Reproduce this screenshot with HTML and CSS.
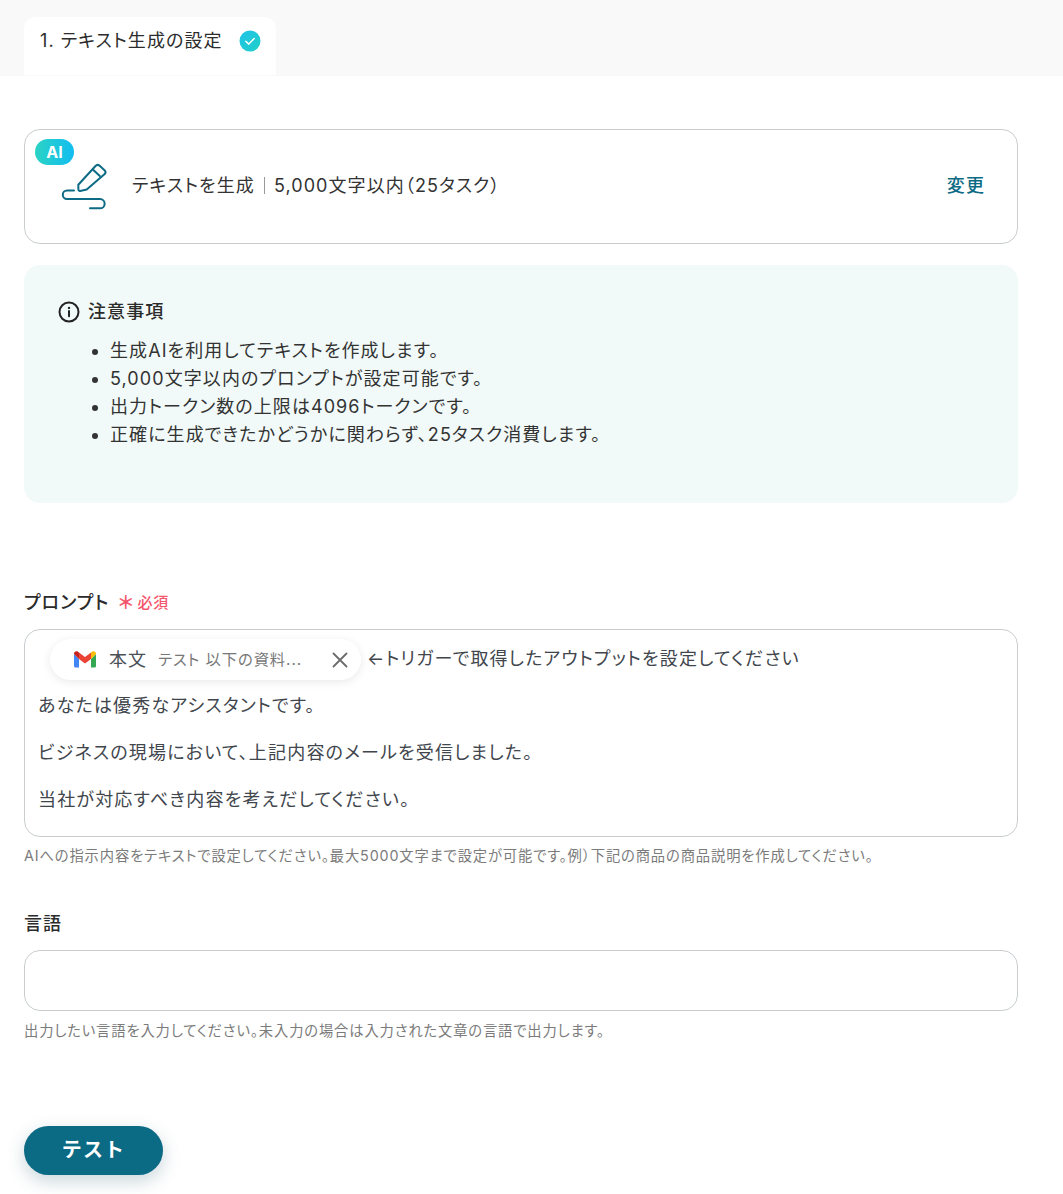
FILE: index.html
```html
<!DOCTYPE html>
<html lang="ja">
<head>
<meta charset="utf-8">
<title>テキスト生成の設定</title>
<link rel="stylesheet" href="styles.css">
</head>
<body>
<div class="tabbar">
  <div class="tab">
    <span class="tab-label">1. テキスト生成の設定</span>
    <svg class="tab-check" width="22" height="22" viewBox="0 0 22 22">
      <defs><linearGradient id="chk" x1="0" y1="0" x2="1" y2="1"><stop offset="0" stop-color="#1dc3e8"/><stop offset="1" stop-color="#22d0c8"/></linearGradient></defs>
      <circle cx="11" cy="11" r="10.5" fill="url(#chk)"/>
      <path d="M6.8 11.2l3 2.9 5.4-5.6" fill="none" stroke="#fff" stroke-width="1.5" stroke-linecap="round" stroke-linejoin="round"/>
    </svg>
  </div>
</div>
<main class="content">
  <section class="action-card">
    <span class="ai-badge">AI</span>
    <svg class="action-icon" width="46" height="48" viewBox="0 0 46 48" fill="none" stroke="#0d6b85" stroke-width="2" stroke-linecap="round" stroke-linejoin="round">
      <path d="M17.300 21.800L34.500 3a3 3 0 0 1 4.200-.2l4.800 4.400a2.800 2.800 0 0 1 .2 3.900L25.700 26.600l-6.600 1.300a1.400 1.400 0 0 1-1.700-1.500z"/>
      <path d="M31.800 6.500l7 6.600"/>
      <path d="M13 27.600H6a4.200 4.200 0 0 0 0 8.400H39a4.600 4.600 0 0 1 0 9.300H29"/>
    </svg>
    <p class="action-text">テキストを生成<span class="sep"></span>5,000文字以内（25タスク）</p>
    <a class="change-link">変更</a>
  </section>

  <section class="notice">
    <h3 class="notice-title">
      <svg class="info" width="22" height="22" viewBox="0 0 22 22" fill="none" stroke="#222" stroke-width="2"><circle cx="11" cy="11" r="9.500"/><path d="M11 10v5.200" stroke-linecap="round"/><circle cx="11" cy="6.900" r="1.200" fill="#222" stroke="none"/></svg>
      注意事項
    </h3>
    <ul class="notice-list">
      <li>生成AIを利用してテキストを作成します。</li>
      <li>5,000文字以内のプロンプトが設定可能です。</li>
      <li>出力トークン数の上限は4096トークンです。</li>
      <li>正確に生成できたかどうかに関わらず、25タスク消費します。</li>
    </ul>
  </section>

  <section class="field field-prompt">
    <div class="field-label">プロンプト<span class="required"><span class="star">＊</span>必須</span></div>
    <div class="textarea">
      <p class="line line-first">
        <span class="chip">
          <svg class="gmail" width="22" height="17" viewBox="0 0 22 17">
            <path d="M0 3v12a1.500 1.500 0 0 0 1.500 1.500H5V8z" fill="#4285f4"/>
            <path d="M17 8v8.500h3.500A1.500 1.500 0 0 0 22 15V3z" fill="#34a853"/>
            <path d="M17 1.500v6.500l5-5V2.500c0-2-2.200-3-3.700-1.900z" fill="#fbbc04"/>
            <path d="M5 8V1.500l6 4.600 6-4.600V8l-6 4.600z" fill="#ea4335"/>
            <path d="M0 2.500V3l5 5V1.500L3.700.600C2.200-.500 0 .5 0 2.500z" fill="#c5221f"/>
          </svg>
          <span class="chip-name">本文</span>
          <span class="chip-value">テスト 以下の資料...</span>
          <svg class="chip-x" width="16" height="16" viewBox="0 0 16 16" stroke="#6b6b6b" stroke-width="1.800" stroke-linecap="round"><path d="M1.500 1.500l13 13M14.500 1.500l-13 13"/></svg>
        </span>←トリガーで取得したアウトプットを設定してください
      </p>
      <p class="line">あなたは優秀なアシスタントです。</p>
      <p class="line">ビジネスの現場において、上記内容のメールを受信しました。</p>
      <p class="line">当社が対応すべき内容を考えだしてください。</p>
    </div>
    <p class="help">AIへの指示内容をテキストで設定してください。最大5000文字まで設定が可能です。例）下記の商品の商品説明を作成してください。</p>
  </section>

  <section class="field field-lang">
    <div class="field-label">言語</div>
    <div class="input"></div>
    <p class="help help-lang">出力したい言語を入力してください。未入力の場合は入力された文章の言語で出力します。</p>
  </section>

  <button class="test-btn">テスト</button>
</main>
</body>
</html>
```
FILE: styles.css
```css
* { box-sizing: border-box; }
html, body { margin: 0; padding: 0; background: #fff; }
body {
  height: 1194px;
  overflow: hidden;
  font-family: "Inter", "Noto Sans CJK JP", sans-serif;
  font-feature-settings: "palt";
  color: #2b2b2b;
}
p, h3, ul { margin: 0; padding: 0; }

.tab-label, .action-text, .change-link, .notice-title, .notice-list,
.field-label, .required, .chip-name, .chip-value, .help, .test-btn {
  letter-spacing: .06em;
}

.tabbar {
  height: 76px;
  background: #f9f9f9;
  padding: 17px 0 0 24px;
}
.tab {
  width: 252px;
  height: 58px;
  background: #fff;
  border-radius: 12px 12px 0 0;
  display: flex;
  align-items: flex-start;
  padding: 12px 0 0 16px;
}
.tab-label { font-size: 18px; line-height: 24px; font-weight: 400; color: #2c2c2c; width: 199px; white-space: nowrap; }
.tab-check { margin-top: 1px; }

.content { padding: 53px 45px 0 24px; }

.action-card {
  position: relative;
  height: 115px;
  border: 1px solid #c9cdd0;
  border-radius: 16px;
  display: flex;
  align-items: flex-start;
  padding: 33px 32px 0 36px;
}
.ai-badge {
  position: absolute;
  left: 10px;
  top: 9px;
  width: 39px;
  height: 26px;
  border-radius: 13px;
  background: linear-gradient(90deg, #2bd3c4, #12bdf0);
  color: #fff;
  font-size: 16px;
  font-weight: 700;
  line-height: 26px;
  text-align: center;
}
.action-icon { flex: none; }
.action-text { flex: 1; margin: 11px 0 0 25px; font-size: 18px; line-height: 24px; color: #333; white-space: nowrap; }
.sep { display: inline-block; width: 1px; height: 17px; background: #999; margin: 0 9px; vertical-align: -2px; }
.change-link { margin-top: 11px; font-size: 18px; line-height: 24px; font-weight: 500; color: #0d6b85; }

.notice {
  margin-top: 21px;
  height: 238px;
  background: #f1faf8;
  border-radius: 16px;
  padding: 35px 34px 0 34px;
}
.notice-title {
  display: flex;
  align-items: center;
  gap: 8px;
  font-size: 18px;
  line-height: 24px;
  font-weight: 500;
  color: #2b2b2b;
}
.notice-list { margin: 13px 0 0 52px; font-size: 18px; line-height: 28px; color: #333; white-space: nowrap; }

.field-prompt { margin-top: 87px; }
.field-lang { margin-top: 46px; }
.field-label { font-size: 18px; line-height: 26px; font-weight: 500; color: #2b2b2b; display: flex; align-items: center; }
.required { margin-left: 9px; font-size: 15px; font-weight: 500; color: #f4566c; display: inline-flex; align-items: center; }
.star { font-size: 18px; width: 19px; font-weight: 700; letter-spacing: 0; }

.textarea {
  position: relative;
  margin-top: 13px;
  height: 208px;
  border: 1px solid #c9cdd0;
  border-radius: 16px;
  padding: 5px 13px 0 13px;
}
.line { font-size: 18px; line-height: 47px; color: #41464d; height: 47px; white-space: nowrap; letter-spacing: .066em; }
.line-first { display: flex; align-items: center; height: 47px; }
.chip {
  display: inline-flex;
  align-items: center;
  width: 311px;
  height: 41px;
  margin: 2px 6px 0 12px;
  border-radius: 21px;
  background: #fff;
  box-shadow: 0 2px 10px rgba(0, 0, 0, .09);
  padding: 0 13px 0 24px;
}
.gmail { flex: none; }
.chip-name { margin-left: 13px; font-size: 18px; color: #4b5058; }
.chip-value { margin-left: 11px; flex: 1; font-size: 15.300px; color: #777; white-space: nowrap; }
.chip-x { flex: none; }

.help { margin-top: 10px; font-size: 14.300px; line-height: 18px; color: #7b7b7b; white-space: nowrap; }
.help-lang { margin-top: 11px; }

.input {
  margin-top: 13px;
  height: 61px;
  border: 1px solid #c9cdd0;
  border-radius: 16px;
}

.test-btn {
  display: block;
  margin-top: 86px;
  width: 139px;
  height: 49px;
  border: 0;
  border-radius: 25px;
  background: #0b6a84;
  color: #fff;
  font-family: inherit;
  font-size: 20px;
  font-weight: 700;
  padding: 0 0 5px 0;
  box-shadow: 0 6px 18px rgba(11, 70, 90, .22);
}
```
